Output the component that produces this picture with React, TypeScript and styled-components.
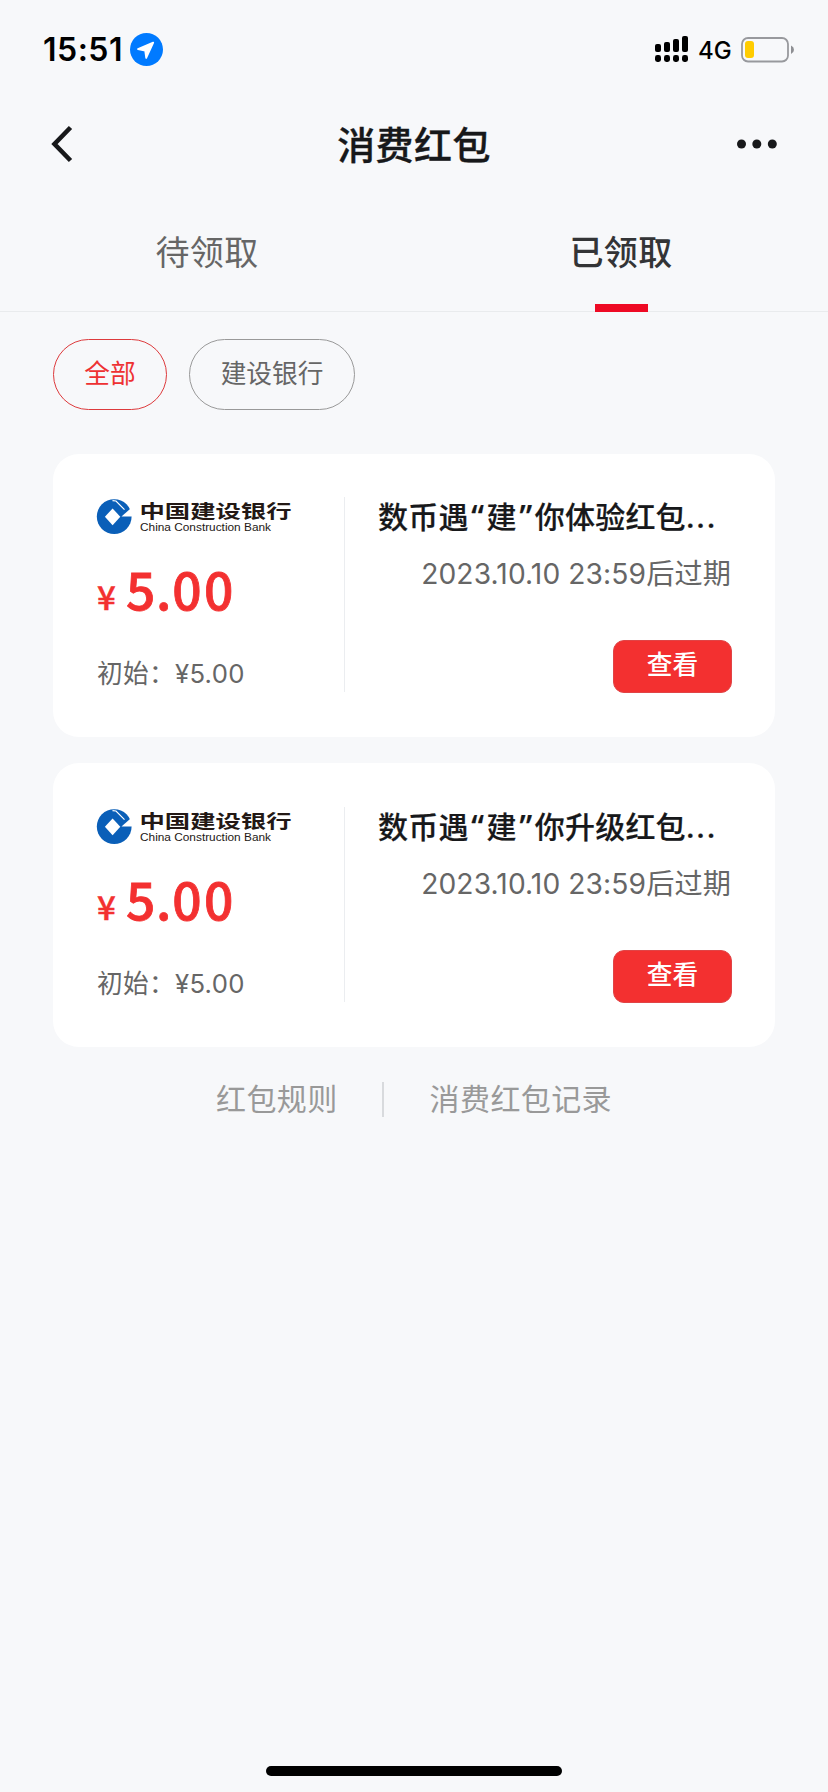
import React from 'react';
import styled, { createGlobalStyle } from 'styled-components';

const GlobalStyle = createGlobalStyle`
  * { box-sizing: border-box; }
  body {
    margin: 0;
    background: #f7f8fa;
    font-family: Inter, "Noto Sans CJK SC", sans-serif;
    -webkit-font-smoothing: antialiased;
  }
`;

const Screen = styled.div`
  width: 828px;
  height: 1792px;
  display: flex;
  flex-direction: column;
  background: #f7f8fa;
  overflow: hidden;
`;

const StatusBar = styled.div`
  height: 99px;
  padding: 0 33px 0 43px;
  display: flex;
  align-items: center;
  justify-content: space-between;
`;

const StatusGroup = styled.div`
  display: flex;
  align-items: center;
`;

const Clock = styled.span`
  width: 87px;
  font-size: 32px;
  font-weight: 600;
  color: #000;
  line-height: 40px;
  letter-spacing: 0.5px;
`;

const Network = styled.span`
  width: 43px;
  margin-left: 10px;
  font-size: 24px;
  font-weight: 500;
  line-height: 30px;
  color: #000;
  padding-top: 2px;
`;

const NavBar = styled.header`
  height: 91px;
  padding: 0 46px 0 48px;
  display: grid;
  grid-template-columns: 60px 1fr 60px;
  align-items: center;
`;

const PageTitle = styled.h1`
  margin: 0;
  padding: 1px 2px 0 0;
  text-align: center;
  font-size: 38px;
  line-height: 54px;
  font-weight: 500;
  letter-spacing: 0.4px;
  -webkit-text-stroke: 0.35px #17181a;
  color: #17181a;
`;

const MoreButton = styled.div`
  display: flex;
  justify-content: flex-end;
`;

const Tabs = styled.nav`
  height: 122px;
  display: flex;
  border-bottom: 1px solid #e9ebed;
`;

const Tab = styled.div<{ $active?: boolean }>`
  flex: 1;
  height: 122px;
  padding-top: 38px;
  display: flex;
  flex-direction: column;
  justify-content: space-between;
  align-items: center;
  font-size: 34px;
  line-height: 50px;
  letter-spacing: 0.3px;
  font-weight: ${(p) => (p.$active ? 500 : 400)};
  color: ${(p) => (p.$active ? '#333436' : '#666')};
`;

const TabMarker = styled.div`
  width: 53px;
  height: 8px;
  background: #ee0a24;
`;

const Filters = styled.div`
  display: flex;
  gap: 22px;
  padding: 27px 53px 0;
`;

const Chip = styled.div<{ $active?: boolean; $width: number }>`
  width: ${(p) => p.$width}px;
  height: 71px;
  padding-bottom: 1px;
  border-radius: 36px;
  border: 1px solid ${(p) => (p.$active ? '#dd3a3c' : '#999')};
  color: ${(p) => (p.$active ? '#ee3132' : '#666')};
  display: flex;
  align-items: center;
  justify-content: center;
  font-size: 25.7px;
  line-height: 36px;
`;

const CouponList = styled.main`
  padding: 44px 53px 0;
  display: flex;
  flex-direction: column;
  gap: 26px;
`;

const Card = styled.article`
  height: 283px;
  padding: 43px 44px 0;
  border-radius: 26px;
  background: #fff;
  display: flex;

  & + & {
    height: 284px;
    padding-top: 44px;
  }
`;

const AmountPane = styled.section`
  width: 248px;
  height: 195px;
  border-right: 1px solid #ebedf0;
`;

const Price = styled.div`
  margin-top: 17px;
  height: 72px;
  display: flex;
  align-items: baseline;
  color: #f33030;
  font-family: "Noto Sans CJK SC", sans-serif;
  line-height: 72px;
`;

const Currency = styled.span`
  width: 29px;
  font-size: 33px;
  font-weight: 500;
  -webkit-text-stroke: 0.4px #f33030;
`;

const Amount = styled.span`
  font-size: 51.5px;
  font-weight: 500;
  letter-spacing: 2.6px;
  -webkit-text-stroke: 0.8px #f33030;
`;

const DecimalPoint = styled.span`
  margin-left: -2px;
  letter-spacing: 0.8px;
`;

const Initial = styled.div`
  margin-top: 32px;
  font-size: 25.7px;
  line-height: 36px;
  letter-spacing: 0.3px;
  color: #666;
`;

const InfoPane = styled.section`
  flex: 1;
  display: flex;
  flex-direction: column;
`;

const CouponTitle = styled.h2`
  margin: 0 0 0 33px;
  height: 40px;
  font-size: 30px;
  line-height: 40px;
  font-weight: 500;
  letter-spacing: 0.2px;
  -webkit-text-stroke: 0.2px #17181a;
  color: #17181a;
  white-space: nowrap;
`;

const Quote = styled.span`
  display: inline-block;
  width: 18px;
  text-align: center;
  font-family: "Noto Sans", sans-serif;
  font-size: 33px;
  line-height: 30px;
`;

const Ellipsis = styled.span`
  letter-spacing: 1.2px;
`;

const Expiry = styled.div`
  margin-top: 17px;
  text-align: right;
  font-size: 28.2px;
  line-height: 40px;
  letter-spacing: 0.1px;
  color: #666;
  white-space: nowrap;
`;

const ViewButton = styled.button`
  align-self: flex-end;
  margin: 46px -1px 0 0;
  width: 119px;
  height: 53px;
  padding: 0 0 3px;
  border: 1px solid #e04446;
  border-radius: 11px;
  background: #f33030;
  color: #fff;
  font: 500 25.7px/36px Inter, "Noto Sans CJK SC", sans-serif;
`;

const FooterLinks = styled.footer`
  margin-top: 32px;
  padding-left: 216px;
  display: flex;
  align-items: center;
  font-size: 30px;
  line-height: 40px;
  letter-spacing: 0.4px;
  color: #999;
`;

const FooterRule = styled.div`
  width: 2px;
  height: 35px;
  margin: 0 46px 0 44px;
  background: #d8dadd;
`;

const HomeBar = styled.div`
  width: 296px;
  height: 10px;
  margin: auto auto 16px;
  border-radius: 5px;
  background: #000;
`;

const Logo = styled.svg`
  display: block;
  overflow: visible;
`;

const LocationIcon = () => (
  <svg width="33" height="33" viewBox="0 0 33 33">
    <circle cx="16.5" cy="16.5" r="16.5" fill="#007aff" />
    <path d="M23.2 9.6 L8 16.2 L15.2 17.6 L16.2 25 Z" fill="#fff" stroke="#fff" strokeWidth="1.8" strokeLinejoin="round" />
  </svg>
);

const SignalIcon = () => (
  <svg width="33" height="27" viewBox="0 0 33 27">
    {[8, 6, 3, 0].map((top, i) => (
      <g key={i}>
        <rect x={i * 9} y={top} width="6" height={16 - top} rx="2" />
        <rect x={i * 9} y="19" width="6" height="7" rx="2.4" />
      </g>
    ))}
  </svg>
);

const BatteryIcon = () => (
  <svg width="54" height="26" viewBox="0 0 54 26">
    <rect x="1" y="1" width="46" height="23.5" rx="6" fill="none" stroke="#98999d" strokeWidth="1.8" />
    <rect x="4" y="4" width="9" height="17" rx="3" fill="#fc0" />
    <path d="M50 8.5 Q53 10 53 12.7 Q53 15.5 50 17 Z" fill="#8e8f93" />
  </svg>
);

const BackIcon = () => (
  <svg width="28" height="42" viewBox="0 0 28 42">
    <path d="M22.5 3.5 L6.5 20 L22.5 36.5" fill="none" stroke="#17181a" strokeWidth="4.6" />
  </svg>
);

const MoreIcon = () => (
  <svg width="46" height="14" viewBox="0 0 46 14">
    <circle cx="5.5" cy="6" r="4.5" fill="#17181a" />
    <circle cx="20.8" cy="6" r="4.5" fill="#17181a" />
    <circle cx="36.3" cy="6" r="4.5" fill="#17181a" />
  </svg>
);

const BankLogo = () => (
  <Logo width="200" height="38" viewBox="0 0 200 38">
    <circle cx="17.2" cy="19.6" r="17.4" fill="#0a5fb8" />
    <path d="M15.6 11.4 L23.3 19.8 L15.6 28.2 L7.9 19.8 Z" fill="#fff" />
    <path d="M24.5 19.6 L33.6 11.6 L36 12 V19.6 Z" fill="#fff" />
    <path d="M15.5 3.6 L19 4 L27.5 12.6" fill="none" stroke="#fff" strokeWidth="1.2" />
    <text x="42.5" y="21.2" fontSize="18.6" fontWeight="700" fill="#231815" textLength="152" lengthAdjust="spacingAndGlyphs" fontFamily="Noto Sans CJK SC, sans-serif">中国建设银行</text>
    <text x="43" y="33.6" fontSize="11.8" fill="#231815" textLength="131" lengthAdjust="spacingAndGlyphs" fontFamily="Liberation Sans, sans-serif">China Construction Bank</text>
  </Logo>
);

const coupons = [
  { theme: '建', name: '你体验红包', expiry: '2023.10.10 23:59后过期' },
  { theme: '建', name: '你升级红包', expiry: '2023.10.10 23:59后过期' },
];

export default function App() {
  return (
    <>
      <GlobalStyle />
      <Screen>
        <StatusBar>
          <StatusGroup>
            <Clock>15:51</Clock>
            <LocationIcon />
          </StatusGroup>
          <StatusGroup>
            <SignalIcon />
            <Network>4G</Network>
            <BatteryIcon />
          </StatusGroup>
        </StatusBar>
        <NavBar>
          <BackIcon />
          <PageTitle>消费红包</PageTitle>
          <MoreButton><MoreIcon /></MoreButton>
        </NavBar>
        <Tabs>
          <Tab>待领取</Tab>
          <Tab $active>已领取<TabMarker /></Tab>
        </Tabs>
        <Filters>
          <Chip $active $width={114}>全部</Chip>
          <Chip $width={166}>建设银行</Chip>
        </Filters>
        <CouponList>
          {coupons.map((coupon) => (
            <Card key={coupon.name}>
              <AmountPane>
                <BankLogo />
                <Price>
                  <Currency>¥</Currency>
                  <Amount>5<DecimalPoint>.</DecimalPoint>00</Amount>
                </Price>
                <Initial>初始：¥5.00</Initial>
              </AmountPane>
              <InfoPane>
                <CouponTitle>
                  数币遇<Quote>“</Quote>{coupon.theme}<Quote>”</Quote>{coupon.name}<Ellipsis>...</Ellipsis>
                </CouponTitle>
                <Expiry>{coupon.expiry}</Expiry>
                <ViewButton>查看</ViewButton>
              </InfoPane>
            </Card>
          ))}
        </CouponList>
        <FooterLinks>
          <span>红包规则</span>
          <FooterRule />
          <span>消费红包记录</span>
        </FooterLinks>
        <HomeBar />
      </Screen>
    </>
  );
}
